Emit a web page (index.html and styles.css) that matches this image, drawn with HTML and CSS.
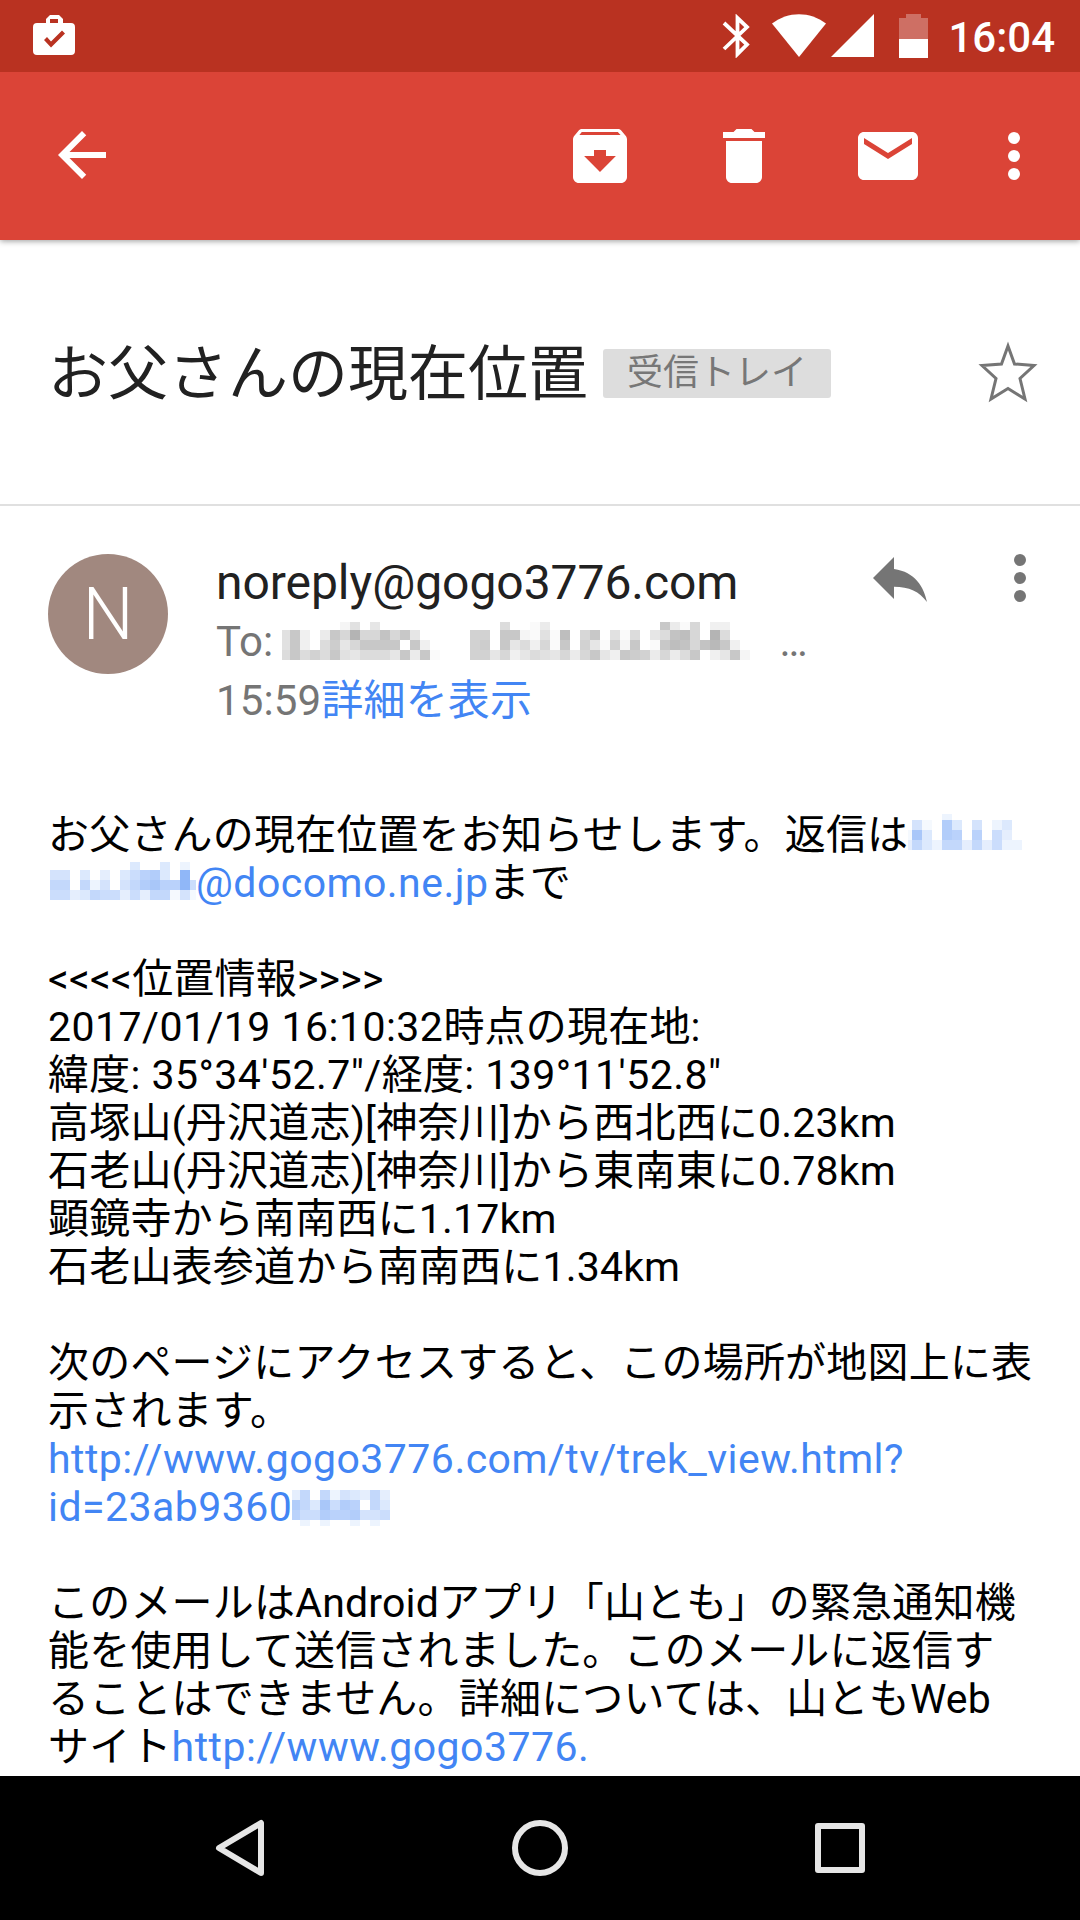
FILE: index.html
```html
<!DOCTYPE html>
<html lang="ja">
<head>
    <meta charset="UTF-8">
    <meta name="viewport" content="width=device-width, initial-scale=1.0">
    <title>お父さんの現在位置</title>
    <link rel="stylesheet" href="styles.css">
</head>
<body>
    <div class="status-bar">
        <svg class="job" width="42" height="42" viewBox="0 0 42 42">
            <path fill="#fff" fill-rule="evenodd" d="M13 9V5l4-4h9l4 4v4h8q4 0 4 4v24q0 4-4 4H4q-4 0-4-4V13q0-4 4-4zM17 5v4h8V5zM14 23l-3 3 7 7.500L32 19.500l-3-3L18 27.500z"/>
        </svg>
        <svg class="bluetooth" width="28" height="44" viewBox="0 0 28 44">
            <path fill="none" stroke="#fff" stroke-width="3.800" d="M2 9l23 21.500-9.500 9.500V4L25 13 2 35"/>
        </svg>
        <svg class="wifi" width="54" height="43" viewBox="0 0 54 43">
            <path fill="#fff" d="M0 9.500C16-3 38-3 54 9.500L27 43z"/>
        </svg>
        <svg class="signal" width="43" height="43" viewBox="0 0 43 43">
            <path fill="#fff" d="M43 0v43H0z"/>
        </svg>
        <svg class="battery" width="29" height="44" viewBox="0 0 29 44">
            <path fill="#fff" opacity=".3" d="M7 0h15v4h7v21H0V4h7z"/>
            <path fill="#fff" d="M0 25h29v19H0z"/>
        </svg>
        <span class="clock">16:04</span>
    </div>

    <div class="toolbar">
        <svg class="icon back" viewBox="0 0 24 24"><path d="M20 11H7.830l5.590-5.590L12 4l-8 8 8 8 1.410-1.410L7.830 13H20z"/></svg>
        <svg class="icon" viewBox="0 0 24 24"><path d="M20.540 5.230l-1.390-1.680C18.880 3.210 18.470 3 18 3H6c-.47 0-.88.21-1.160.55L3.460 5.230C3.170 5.570 3 6.020 3 6.500V19c0 1.100.9 2 2 2h14c1.100 0 2-.9 2-2V6.500c0-.48-.17-.93-.46-1.270zM12 17.300L6.700 12H10v-2h4v2h3.300zM5.120 5l.81-1h12l.94 1z"/></svg>
        <svg class="icon" viewBox="0 0 24 24"><path d="M6 19c0 1.100.9 2 2 2h8c1.100 0 2-.9 2-2V7H6zM19 4h-3.500l-1-1h-5l-1 1H5v2h14z"/></svg>
        <svg class="icon" viewBox="0 0 24 24"><path d="M20 4H4c-1.100 0-2 .9-2 2v12c0 1.100.9 2 2 2h16c1.100 0 2-.9 2-2V6c0-1.100-.9-2-2-2zm0 4l-8 5-8-5V6l8 5 8-5z"/></svg>
        <svg class="icon more" viewBox="0 0 24 24"><circle cx="12" cy="6" r="2"/><circle cx="12" cy="12" r="2"/><circle cx="12" cy="18" r="2"/></svg>
    </div>

    <div class="subject">
        <h1>お父さんの現在位置</h1>
        <span class="label">受信トレイ</span>
        <svg class="star" width="60" height="62" viewBox="0 0 60 62">
            <path fill="none" stroke="#757575" stroke-width="3" d="M30 5l6.500 18 19.500 1.500L42 37.500l5 20.500-17-10.500L13 58l5-20.500L4 24.500 23.500 23z"/>
        </svg>
    </div>

    <div class="sender">
        <div class="avatar">N</div>
        <div class="details">
            <div class="name">noreply@gogo3776.com</div>
            <div class="to">To: <svg class="mosaic to-first" width="158" height="38" viewBox="2 2 158 38" data-rows="0000002605000000 6b304b8f88c8b500 6b307a58bbbb0b30 7b797b657775b4b1"></svg><svg class="mosaic to-second" width="280" height="38" viewBox="0 2 280 38" data-rows="0007001400000000000b41803300 990bb2161d08b0617057cd80f700 9a0b57381b095192b01bdc8ceb30 995835765848b53ba94847b035b2"></svg>…</div>
            <div class="time">15:59<a>詳細を表示</a></div>
        </div>
        <svg class="icon reply" viewBox="0 0 24 24"><path d="M10 9V5l-7 7 7 7v-4.100c5 0 8.500 1.600 11 5.100-1-5-4-10-11-11z"/></svg>
        <svg class="icon more" viewBox="0 0 24 24"><circle cx="12" cy="6" r="2"/><circle cx="12" cy="12" r="2"/><circle cx="12" cy="18" r="2"/></svg>
    </div>

    <div class="message">
        お父さんの現在位置をお知らせします。返信は<svg class="mosaic address-start" width="114" height="36" viewBox="6 4 114 36" data-rows="000020000000 051094050240 1a4098080630 374277373622"></svg><br>
        <svg class="mosaic address-end" width="156" height="38" viewBox="0 2 156 38" data-rows="0000000004004020 05504030468940d0 07707250579a88d6 0663476636377151"></svg><a>@docomo.ne.jp</a>まで<br>
        <br>
        &lt;&lt;&lt;&lt;位置情報&gt;&gt;&gt;&gt;<br>
        <span class="numbers">2017/01/19 16:10:32</span>時点の現在地:<br>
        緯度<span class="numbers">: 35°34'52.7"/</span>経度<span class="numbers">: 139°11'52.8"</span><br>
        高塚山(丹沢道志)[神奈川]から西北西に0.23km<br>
        石老山(丹沢道志)[神奈川]から東南東に0.78km<br>
        顕鏡寺から南南西に1.17km<br>
        石老山表参道から南南西に1.34km<br>
        <br>
        次のページにアクセスすると、この場所が地図上に表<br>
        示されます。<br>
        <a>http://www.gogo3776.com/tv/trek_view.html?</a><br>
        <a>id=23ab9360</a><svg class="mosaic track-id" width="98" height="36" viewBox="2 0 98 36" data-rows="3707254373 974a698074 8669889556 0202002020"></svg><br>
        <br>
        このメールはAndroidアプリ「山とも」の緊急通知機<br>
        能を使用して送信されました。このメールに返信す<br>
        ることはできません。詳細については、山ともWeb<br>
        サイト<a>http://www.gogo3776.</a>
    </div>

    <div class="nav-bar">
        <svg width="60" height="60" viewBox="0 0 60 60"><path d="M51 5v50L9 30z"/></svg>
        <svg width="60" height="60" viewBox="0 0 60 60"><circle cx="30" cy="30" r="25"/></svg>
        <svg width="60" height="60" viewBox="0 0 60 60"><path d="M8 8h44v44H8z"/></svg>
    </div>

    <script>
        // Each hex digit is the strength of one 10px block
        document.querySelectorAll('.mosaic').forEach(function(svg) {
            svg.dataset.rows.split(' ').forEach(function(row, y) {
                row.split('').forEach(function(level, x) {
                    const rect = document.createElementNS('http://www.w3.org/2000/svg', 'rect');
                    rect.setAttribute('x', x * 10);
                    rect.setAttribute('y', y * 10);
                    rect.setAttribute('width', 10);
                    rect.setAttribute('height', 10);
                    rect.setAttribute('fill-opacity', parseInt(level, 16) * 0.05);
                    svg.appendChild(rect);
                });
            });
        });
    </script>
</body>
</html>
```
FILE: styles.css
```css
* {
    box-sizing: border-box;
}
body {
    margin: 0;
    width: 1080px;
    height: 1920px;
    overflow: hidden;
    display: flex;
    flex-direction: column;
    background: #fff;
    color: #000;
    font-family: Roboto, "Noto Sans CJK JP", sans-serif;
}
svg {
    display: block;
    flex: none;
}
a {
    color: #4285f4;
}
.status-bar {
    display: flex;
    flex: none;
    height: 72px;
    padding: 14px 25px 0 33px;
    background: #b93221;
    z-index: 2;
}
.job {
    margin-right: auto;
}
.wifi {
    margin-left: 22px;
}
.signal {
    margin-left: 5px;
}
.battery {
    margin-left: 25px;
}
.clock {
    margin-left: 20px;
    color: #fff;
    font-size: 42px;
    font-weight: 500;
    line-height: 47px;
}
.toolbar {
    display: flex;
    flex: none;
    align-items: center;
    gap: 72px;
    height: 168px;
    padding: 0 30px 0 46px;
    background: #db4437;
    box-shadow: 0 1px 6px rgba(0,0,0,0.4);
    z-index: 1;
}
.icon {
    width: 72px;
    height: 72px;
    fill: #fff;
}
.toolbar .back {
    margin-right: auto;
    margin-bottom: 2px;
}
.toolbar .more {
    margin-left: -18px;
}
.subject {
    display: flex;
    flex: none;
    align-items: center;
    height: 266px;
    padding: 0 42px 0 48px;
    border-bottom: 2px solid #e0e0e0;
}
h1 {
    margin: 5px 0 0;
    color: #212121;
    font-size: 60px;
    font-weight: 400;
    line-height: 72px;
}
.label {
    height: 49px;
    margin: 3px auto 0 15px;
    padding: 0 24px;
    border-radius: 3px;
    background: #ddd;
    color: #777;
    font-size: 36px;
    line-height: 48px;
}
.sender {
    display: flex;
    flex: none;
    height: 305px;
    padding: 48px 24px 0 48px;
    color: #757575;
    font-size: 42px;
    white-space: nowrap;
}
.sender .icon {
    margin-top: -12px;
    fill: #757575;
}
.sender .more {
    margin-left: 48px;
}
.avatar {
    width: 120px;
    height: 120px;
    border-radius: 50%;
    background: #a1887f;
    color: #fff;
    font-size: 72px;
    font-weight: 300;
    line-height: 122px;
    text-align: center;
}
.details {
    flex: 1;
    margin-left: 48px;
}
.name {
    color: #212121;
    font-size: 48px;
    letter-spacing: -0.05px;
    line-height: 58px;
}
.to {
    height: 58px;
    line-height: 60px;
}
.time {
    line-height: 62px;
    letter-spacing: 0.15px;
}
.message {
    flex: none;
    height: 965px;
    padding-left: 48px;
    font-size: 41px;
    letter-spacing: 0.2px;
    line-height: 48px;
    white-space: nowrap;
}
.message a,
.numbers {
    letter-spacing: 0.47px;
}
.mosaic {
    display: inline-block;
    fill: #4285f4;
    opacity: 0.9;
    shape-rendering: crispEdges;
}
.to .mosaic {
    fill: #9b9b9b;
    opacity: 1;
    vertical-align: -4px;
}
.to-first {
    margin-left: -2px;
}
.to-second {
    margin: 0 30px;
}
.address-start {
    vertical-align: -1px;
}
.address-end {
    margin-left: -8px;
    vertical-align: -3px;
}
.track-id {
    vertical-align: -5px;
}
.nav-bar {
    display: flex;
    flex: none;
    align-items: center;
    justify-content: center;
    gap: 240px;
    height: 144px;
    background: #000;
}
.nav-bar svg {
    fill: none;
    stroke: #e6e6e6;
    stroke-width: 6px;
    stroke-linejoin: round;
}
```
